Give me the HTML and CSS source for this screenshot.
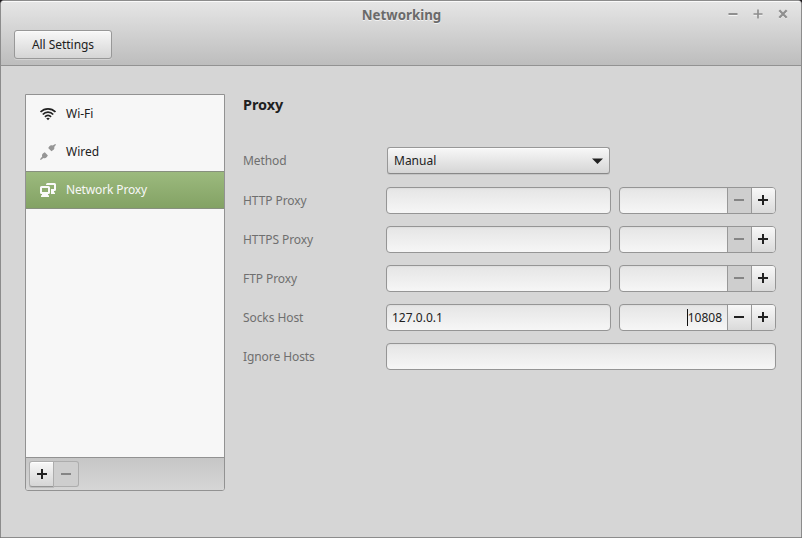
FILE: index.html
```
<!DOCTYPE html>
<html lang="en">
<head>
<meta charset="utf-8">
<title>Networking</title>
<link rel="stylesheet" href="styles.css">
</head>
<body>
<div class="window">
  <header class="header">
    <div class="titlebar">
      <h1 class="title">Networking</h1>
      <div class="controls">
        <svg width="10" height="10"><path d="M.5 6.5h9" stroke="#fff" stroke-opacity=".7"/><path d="M.5 5h9" stroke="#8f8f8f" stroke-width="2"/></svg>
        <svg width="10" height="10"><path d="M.5 6.5h9M5 1v9.5" stroke="#fff" stroke-opacity=".5"/><path d="M.5 5h9M5 .5v9" stroke="#8f8f8f" stroke-width="1.7"/></svg>
        <svg width="10" height="10"><path d="M1.3 2.3l7.4 7.4M8.7 2.3L1.3 9.7" stroke="#fff" stroke-opacity=".6" stroke-width="2"/><path d="M1.3 1.3l7.4 7.4M8.7 1.3L1.3 8.7" stroke="#8f8f8f" stroke-width="2.3"/></svg>
      </div>
    </div>
    <button class="btn all-settings">All Settings</button>
  </header>
  <main class="content">
    <aside class="sidebar">
      <ul class="devices">
        <li class="device">
          <svg width="16" height="16" fill="none" stroke="#222" stroke-width="1.800"><path d="M.5 6C4.6 1.700 11.4 1.700 15.5 6"/><path d="M2.800 8.500C5.7 5.3 10.3 5.3 13.2 8.500"/><path d="M5 10.900C6.7 8.900 9.3 8.900 11 10.900"/><path d="M6.2 12.300Q8 11 9.800 12.300L8 14.200z" fill="#222" stroke="none"/></svg>
          Wi-Fi
        </li>
        <li class="device">
          <svg width="16" height="16" fill="#969696"><path d="M15.3 0l.7.7-1.800 2.300c.5 1.300 0 2.300-1 3.100l-1.800 1.200-3.200-3.200 1.200-1.800c.8-1 2-1.300 3.300-.7z"/><path d="M4.800 8.300l3.100 3.100-1.300 1.800c-.9.9-2 1.200-3.200.7L.8 16l-.8-.8 2.200-2.600c-.5-1.200-.2-2.200.7-3.100z"/></svg>
          Wired
        </li>
        <li class="device selected">
          <svg width="16" height="16" fill="#fafafa"><path fill-rule="evenodd" d="M1.500 4h7Q10 4 10 5.500v5Q10 12 8.500 12h-7Q0 12 0 10.500v-5Q0 4 1.500 4zM2 6v4h6V6z"/><path d="M2 12h6v1l1 .5V15H1v-1.500l1-.5z"/><path d="M6 3v-.5Q6 1 7.500 1h7Q16 1 16 2.500v5Q16 9 14.500 9H14v1l1 1v1h-4V7h3V3z"/></svg>
          <span class="tight">Network Proxy</span>
        </li>
      </ul>
      <div class="toolbar">
        <button class="btn tool add"><i class="sign plus"></i></button><button class="btn tool remove off"><i class="sign"></i></button>
      </div>
    </aside>
    <section class="form">
      <h2 class="heading">Proxy</h2>
      <div class="row method"><label>Method</label><button class="btn select"><span>Manual</span><svg width="11" height="6"><path d="M0 .5h11L5.500 6z" fill="#222"/></svg></button></div>
      <div class="row"><label>HTTP Proxy</label><div class="field host"></div><div class="field spin"><span class="value"></span><i class="step off"><i class="sign"></i></i><i class="step"><i class="sign plus"></i></i></div></div>
      <div class="row"><label>HTTPS Proxy</label><div class="field host"></div><div class="field spin"><span class="value"></span><i class="step off"><i class="sign"></i></i><i class="step"><i class="sign plus"></i></i></div></div>
      <div class="row"><label>FTP Proxy</label><div class="field host"></div><div class="field spin"><span class="value"></span><i class="step off"><i class="sign"></i></i><i class="step"><i class="sign plus"></i></i></div></div>
      <div class="row"><label>Socks Host</label><div class="field host">127.0.0.1</div><div class="field spin"><span class="value"><b class="caret"></b>10808</span><i class="step"><i class="sign"></i></i><i class="step"><i class="sign plus"></i></i></div></div>
      <div class="row"><label>Ignore Hosts</label><div class="field wide"></div></div>
    </section>
  </main>
</div>
</body>
</html>
```
FILE: styles.css
```
* { box-sizing: border-box; }
body { margin: 0; background: #201c20; font: 12px/16px "Noto Sans", sans-serif; color: #212121; }
h1, h2, ul { margin: 0; padding: 0; }
svg { display: block; flex: none; }
.window { width: 802px; height: 538px; border: 1px solid #8c8c8c; border-radius: 4px 4px 0 0; background: #d6d6d6; overflow: hidden; }
.header { height: 65px; border-bottom: 1px solid #929292; background: linear-gradient(#e6e6e6, #bdbdbd); box-shadow: inset 0 1px #fafafa; }
.titlebar { height: 29px; display: grid; grid-template-columns: 1fr auto 1fr; padding-left: 1px; }
.title { grid-column: 2; font-size: 13.300px; line-height: 28px; color: #6a6a6a; text-shadow: 0 1px #f2f2f2; }
.controls { display: flex; justify-content: flex-end; gap: 15px; padding: 8px 13px 0 0; }
.btn { display: flex; align-items: center; justify-content: center; padding: 0; font: inherit; color: inherit; border: 1px solid #989898; border-radius: 3px; background: linear-gradient(#f8f8f8, #d5d5d5); box-shadow: inset 0 1px #fcfcfc; }
.all-settings { width: 98px; height: 29px; margin-left: 13px; letter-spacing: -.04px; box-shadow: inset 0 1px #fcfcfc, 0 1px rgba(255,255,255,.3); }
.content { display: flex; padding: 28px 25px 0 24px; }
.sidebar { width: 200px; height: 397px; display: flex; flex-direction: column; border: 1px solid #929292; border-radius: 0 0 3px 3px; background: #f7f7f7; overflow: hidden; }
.devices { flex: 1; list-style: none; }
.device { height: 38px; display: flex; align-items: center; gap: 10px; padding-left: 14px; }
.selected { color: #f7f7f7; background: linear-gradient(#9cba7e, #83a264); border: solid #87907e; border-width: 1px 0; }
.tight { letter-spacing: -.14px; }
.toolbar { height: 33px; display: flex; padding: 3px; border-top: 1px solid #929292; background: linear-gradient(#c6c6c6, #d6d6d6); }
.tool { width: 25px; height: 26px; border-color: #adadad; }
.add { border-radius: 3px 0 0 3px; border-bottom-color: #949494; box-shadow: inset 0 1px #fff, 0 1px #bdbdbd; }
.remove { border-left: 0; border-radius: 0 3px 3px 0; box-shadow: none; }
.off { background: #cecece; }
.sign { display: block; width: 10px; height: 2px; background: #212121; position: relative; }
.plus::after { content: ""; position: absolute; left: 4px; top: -4px; width: 2px; height: 10px; background: #212121; }
.off .sign { background: #858585; }
.form { flex: 1; margin-left: 18px; }
.heading { font-size: 14.400px; line-height: 22px; height: 53px; }
.row { height: 27px; margin-bottom: 12px; display: flex; align-items: center; }
.method { margin-bottom: 13px; }
.row label { width: 143px; flex: none; color: #6f6f6f; letter-spacing: -.08px; }
.select { width: 223px; height: 27px; margin-left: 1px; padding: 0 6px; justify-content: space-between; border-bottom-color: #888; box-shadow: inset 0 1px #fcfcfc, 0 1px #c4c4c4; }
.field { height: 27px; display: flex; align-items: center; border: 1px solid #959595; border-radius: 4px; background: linear-gradient(#e5e5e5, #f6f6f6); box-shadow: inset 0 1px 1px #dedede; overflow: hidden; }
.host { width: 225px; padding-left: 5px; margin-right: 8px; }
.spin { width: 157px; }
.wide { width: 390px; }
.value { flex: 1; display: flex; align-items: center; justify-content: flex-end; padding-right: 5px; }
.caret { width: 1px; height: 17px; background: #111; }
.step { width: 24px; height: 25px; padding: 0 0 1px 6px; display: flex; align-items: center; border-left: 1px solid #989898; background: linear-gradient(#f8f8f8, #dadada); }
.step.off { background: #cecece; }
```
